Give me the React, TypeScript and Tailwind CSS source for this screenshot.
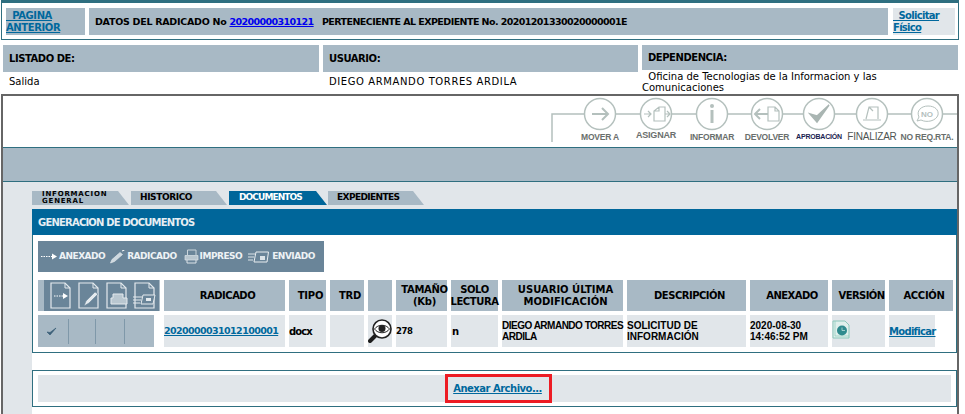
const stroke = "#b4c0bd"

function ActionStrip() {
  return (
    <svg width="406" height="46" viewBox="0 0 406 46" fill="none" className="block">
      <path d="M1 46V18H33M65 18H89M121 18H145M177 18H200M232 18H252M284 18H305M337 18H360M392 18H406" stroke={stroke} strokeWidth="1.5" />
      {[49, 105, 161, 216, 268, 321, 376].map((cx) => (
        <circle key={cx} cx={cx} cy="18" r="15.5" stroke={stroke} strokeWidth="1.5" />
      ))}
      {/* mover */}
      <path d="M41 18H57M51 12L57 18L51 24" stroke={stroke} strokeWidth="2" />
      {/* asignar */}
      <path d="M93 18H100M97 15L100 18L97 21M103 25V15L108 11H114V25ZM108 11V15H103M114 18H119M116 15L119 18L116 21" stroke={stroke} strokeWidth="1.2" />
      {/* informar */}
      <circle cx="161" cy="10" r="2" fill={stroke} />
      <path d="M161 14V27" stroke={stroke} strokeWidth="3" />
      {/* devolver */}
      <path d="M205 18H217M209 13L204 18L209 23" stroke={stroke} strokeWidth="2" />
      <path d="M217 25V11H224L228 15V25ZM224 11V15H228" stroke={stroke} strokeWidth="1.2" />
      {/* aprobacion */}
      <path d="M259 18L266 26L278 9L266 20Z" fill="#a9b5b2" stroke="#a9b5b2" strokeWidth="1.5" />
      {/* finalizar */}
      <path d="M315 23L318 11H327V23M312 24H330M318 11L322 15" stroke={stroke} strokeWidth="1.2" />
      {/* no req */}
      <path d="M366 25L368 21C365 15 370 10 377 10C384 10 388 14 387 19C385 25 376 27 370 24Z" stroke={stroke} />
      <text x="370" y="21" fontSize="8" fontFamily="'Liberation Sans', sans-serif" fontWeight="700" fill={stroke}>NO</text>
    </svg>
  )
}

const actionLabels = [
  { text: "MOVER A", w: "w-[56px]", cls: "font-bold text-[8.5px] text-[#6a6f6d]" },
  { text: "ASIGNAR", w: "w-[56px]", cls: "font-bold text-[9px] text-[#6a6f6d] -mt-[2px]" },
  { text: "INFORMAR", w: "w-[56px]", cls: "font-bold text-[8.5px] text-[#6a6f6d]" },
  { text: "DEVOLVER", w: "w-[54px]", cls: "font-bold text-[8.5px] text-[#6a6f6d]" },
  { text: "APROBACIÓN", w: "w-[50px]", cls: "font-bold text-[7px] text-[#1a2250] mt-px" },
  { text: "FINALIZAR", w: "w-[56px]", cls: "font-normal text-[10px] text-[#4f5452] -mt-[2px]" },
  { text: "NO REQ.RTA.", w: "w-[54px]", cls: "font-bold text-[8.5px] text-[#6a6f6d]" },
]

function PageIcon({ children }: { children?: React.ReactNode }) {
  return (
    <svg width="24" height="27" viewBox="0 0 24 27" fill="none" className="shrink-0">
      <path d="M3 1H17L22 6V26H3Z" stroke="#e4eaee" strokeWidth="1.2" />
      <path d="M17 1V6H22" stroke="#e4eaee" strokeWidth="1" />
      {children}
    </svg>
  )
}

function Arrow() {
  return (
    <svg width="17" height="7" viewBox="0 0 17 7" className="shrink-0">
      <path d="M0 3.5H11" stroke="#fff" strokeDasharray="1.5 1" />
      <path d="M11 0.5L16 3.5L11 6.5Z" fill="#fff" />
    </svg>
  )
}

function Pen() {
  return (
    <svg width="15" height="14" viewBox="0 0 15 14" fill="none" className="shrink-0">
      <path d="M0.5 13L2 9.5L10 2.5L12.5 4.5L4.5 11.5Z" fill="#cfd9e0" stroke="#e7ecef" strokeWidth="0.6" />
      <path d="M12 1L14.5 0" stroke="#fff" />
    </svg>
  )
}

function Printer() {
  return (
    <svg width="15" height="15" viewBox="0 0 15 15" fill="none" className="shrink-0">
      <path d="M3.5 6V1H12V6" stroke="#c9d4db" />
      <path d="M1 6.5H14V11H1Z" fill="#b7c5ce" stroke="#dbe3e8" strokeWidth="0.7" />
      <path d="M3 11V14H12V11" stroke="#dbe3e8" />
    </svg>
  )
}

function Mail() {
  return (
    <svg width="21" height="12" viewBox="0 0 21 12" fill="none" className="shrink-0">
      <path d="M0 3H7M0 6H6M0 9H5" stroke="#dbe3e8" />
      <path d="M8 1H20.5L19 11H6Z" stroke="#e7ecef" />
      <path d="M12 5H17V9H12Z" fill="#dbe3e8" />
    </svg>
  )
}

function Magnifier() {
  return (
    <svg width="24" height="24" viewBox="0 0 24 24" fill="none">
      <path d="M8 16L2 22" stroke="#1d1d1d" strokeWidth="4" strokeLinecap="round" />
      <circle cx="14" cy="10" r="9" fill="#fff" stroke="#222" strokeWidth="1.6" />
      <path d="M6.5 10C10 5 18 5 21.5 10C18 15 10 15 6.5 10Z" fill="#fff" stroke="#222" />
      <circle cx="14" cy="9.5" r="3.5" fill="#222" />
    </svg>
  )
}

function VersionIcon() {
  return (
    <svg width="18" height="19" viewBox="0 0 18 19" fill="none">
      <path d="M1 1H13L17 5V18H1Z" fill="#dff0ec" stroke="#8cc8bb" />
      <path d="M3 1V16H17" stroke="#8cc8bb" strokeWidth="0.7" />
      <circle cx="10" cy="10.5" r="5" fill="#2f8b8e" />
      <path d="M10 7.5V10.5H13" stroke="#cfe9e5" strokeWidth="0.7" />
    </svg>
  )
}

const headers = [
  { text: "RADICADO", cls: "pl-[6px] tracking-[-0.5px]" },
  { text: "TIPO", cls: "pl-[6px] tracking-[-0.2px]" },
  { text: "TRD", cls: "pl-[6px] tracking-[-0.2px]" },
  { text: "", cls: "" },
  { text: "TAMAÑO (Kb)", cls: "pl-[6px] tracking-[-0.3px]" },
  { text: "SOLO LECTURA", cls: "tracking-[-0.4px]" },
  { text: "USUARIO ÚLTIMA MODIFICACIÓN", cls: "pl-[6px]" },
  { text: "DESCRIPCIÓN", cls: "pl-[6px] tracking-[-0.5px]" },
  { text: "ANEXADO", cls: "pl-[6px] tracking-[-0.5px]" },
  { text: "VERSIÓN", cls: "pl-[6px] tracking-[-0.6px]" },
  { text: "ACCIÓN", cls: "pl-[6px] tracking-[-0.3px]" },
]

const headCell =
  "flex items-center justify-center bg-[#a8b9c5] text-center text-[10px] leading-[11.5px] font-bold text-black"
const bodyCell = "flex items-center bg-[#e1e6ea] font-bold text-black"
const tabShape = "[clip-path:polygon(0_0,calc(100%-11px)_0,100%_100%,0_100%)]"

export default function App() {
  return (
    <div className="h-[414px] w-[965px] overflow-hidden bg-white font-['DejaVu_Sans','Verdana',sans-serif] text-black">
      {/* top frame */}
      <div className="ml-px w-[958px] border-x border-b border-[#2f6f80] border-t-[3px] px-1 pt-[5px] pb-1">
        <div className="flex h-[27px] gap-1 text-[10px] font-bold">
          <div className="w-[79px] shrink-0 bg-[#a8b9c5] pt-[2px] leading-[12px] tracking-[-0.4px] text-[#00689d]">
            <a href="#" className="underline">
              &nbsp;&nbsp;PAGINA ANTERIOR
            </a>
          </div>
          <div className="w-[799px] shrink-0 whitespace-pre bg-[#a8b9c5] pl-[6px] text-[9.5px] leading-[27px]">
            <span className="tracking-[-0.27px]">DATOS DEL RADICADO No </span>
            <a href="#" className="tracking-[-0.6px] text-[#0000ee] underline">
              20200000310121
            </a>
            <span className="tracking-[-0.55px]">{"   "}PERTENECIENTE AL EXPEDIENTE No. </span>
            <span className="tracking-[-0.6px]">20201201330020000001E</span>
          </div>
          <div className="ml-px w-[62px] shrink-0 bg-[#e1e6ea] pt-[2px] leading-[12px] tracking-[-0.7px] text-[#00689d]">
            <a href="#" className="underline">
              &nbsp;&nbsp;Solicitar Físico
            </a>
          </div>
        </div>
      </div>

      {/* listado */}
      <div className="mt-[5px] ml-[3px] flex h-[49px] w-[955px] gap-1 text-[10px]">
        <div className="w-[316px]">
          <div className="flex h-[27px] items-center bg-[#a8b9c5] pl-[6px] font-bold tracking-[-0.45px]">LISTADO DE:</div>
          <div className="pl-[6px] pt-[2px]">Salida</div>
        </div>
        <div className="w-[315px]">
          <div className="flex h-[27px] items-center bg-[#a8b9c5] pl-[6px] font-bold tracking-[-0.45px]">USUARIO:</div>
          <div className="pl-[6px] pt-[2px] tracking-[0.6px]">DIEGO ARMANDO TORRES ARDILA</div>
        </div>
        <div className="w-[316px]">
          <div className="flex h-[25px] items-center bg-[#a8b9c5] pl-[6px] font-bold tracking-[-0.45px]">DEPENDENCIA:</div>
          <div className="pt-px leading-[11px]">&nbsp;&nbsp;Oficina de Tecnologias de la Informacion y las Comunicaciones</div>
        </div>
      </div>

      {/* main frame */}
      <div className="ml-px w-[958px] border-x-2 border-t-2 border-[#666]">
        <div className="h-[51px] bg-white">
          <div className="ml-[548px] w-[406px]">
            <ActionStrip />
            <div className="-mt-[11px] flex pl-[21px] font-['Liberation_Sans',sans-serif] tracking-[-0.2px]">
              {actionLabels.map((l) => (
                <div key={l.text} className={`${l.w} flex justify-center whitespace-nowrap ${l.cls}`}>
                  {l.text}
                </div>
              ))}
            </div>
          </div>
        </div>
        <div className="h-[35px] border-y border-[#2f6f80] bg-[#a8b9c5]" />

        <div className="flex h-[240px] bg-[#e1e6ea]">
          <div className="w-[29px] shrink-0" />
          <div className="min-w-0 flex-1">
            {/* tabs */}
            <div className="flex h-[27px] pt-[9px] text-[9px] font-bold">
              <div className={`flex h-[14px] w-[97px] items-center bg-[#a8b9c5] pl-[10px] text-[7px] leading-[7px] tracking-[0.8px] ${tabShape}`}>
                INFORMACION GENERAL
              </div>
              <div className={`ml-[2px] flex h-[14px] w-[96px] items-center bg-[#a8b9c5] pl-[9px] tracking-[-0.4px] ${tabShape}`}>
                HISTORICO
              </div>
              <div className={`ml-[2px] flex h-[14px] w-[98px] items-center bg-[#00669a] pb-px pl-[10px] tracking-[-0.9px] text-white ${tabShape}`}>
                DOCUMENTOS
              </div>
              <div className={`ml-px flex h-[14px] w-[96px] items-center bg-[#a8b9c5] pl-[9px] tracking-[-0.6px] ${tabShape}`}>
                EXPEDIENTES
              </div>
            </div>

            <div className="bg-white">
              <div className="flex h-[26px] items-center bg-[#00669a] pl-[6px] text-[10px] font-bold tracking-[-0.8px] text-[#e6eef3]">
                GENERACION DE DOCUMENTOS
              </div>

              <div className="border-x border-b border-[#2f6f80] px-[5px] pt-[6px] pb-[5px]">
                <div className="flex h-[31px] w-[286px] items-center bg-[#6a8599] pl-[3px] text-[9px] font-bold tracking-[-0.5px] text-[#eef2f5]">
                  <Arrow />
                  <span className="ml-[1px] mr-[5px]">ANEXADO</span>
                  <Pen />
                  <span className="ml-[2px] mr-[7px]">RADICADO</span>
                  <Printer />
                  <span className="ml-[1px] mr-[6px]">IMPRESO</span>
                  <Mail />
                  <span className="ml-[3px]">ENVIADO</span>
                </div>

                <div className="mt-2 grid grid-cols-[122px_121px_37px_34px_24px_51px_47px_121px_119px_78px_53px_64px] gap-1">
                  <div className="flex h-[31px] bg-[#a8b9c5] pl-[6px]">
                    <div className="flex h-full w-[115px] items-center gap-[4px] bg-[#6a8599] pl-[4px]">
                      <PageIcon>
                        <g transform="translate(5 11)">
                          <path d="M1 3H10" stroke="#fff" strokeDasharray="1.5 1" />
                          <path d="M10 0L15 3L10 6Z" fill="#fff" />
                        </g>
                      </PageIcon>
                      <PageIcon>
                        <path d="M8 24L10 19L19 10L22 12L13 21Z" fill="#e4eaee" stroke="#6a8599" strokeWidth="0.6" />
                      </PageIcon>
                      <PageIcon>
                        <path d="M9 12H19V16H23V22H7V16H9Z" fill="#b9c7d0" stroke="#e4eaee" />
                      </PageIcon>
                      <PageIcon>
                        <path d="M1 15H10M1 18H9M1 21H8" stroke="#e4eaee" />
                        <path d="M11 13H23L21 22H9Z" fill="#6a8599" stroke="#e4eaee" />
                        <path d="M14 16H19V19H14Z" fill="#e4eaee" />
                      </PageIcon>
                    </div>
                  </div>
                  {headers.map((h, i) => (
                    <div key={i} className={`${headCell} ${h.cls}`}>
                      {h.text}
                    </div>
                  ))}

                  <div className="flex h-[32px] w-[116px] items-center bg-[#a8b9c5] pl-[9px]">
                    <svg width="10" height="9" viewBox="0 0 10 9" className="shrink-0">
                      <path d="M0 5L3 8L9 1L3 5.5Z" fill="#3c6079" stroke="#3c6079" strokeWidth="0.7" />
                    </svg>
                    <div className="ml-[11px] h-[25px] w-px bg-[#7f98a9]" />
                    <div className="ml-[26px] h-[25px] w-px bg-[#7f98a9]" />
                    <div className="ml-[28px] h-[25px] w-px bg-[#7f98a9]" />
                  </div>
                  <div className={bodyCell}>
                    <a href="#" className="text-[9.5px] tracking-[-0.6px] text-[#00689d] underline">
                      2020000031012100001
                    </a>
                  </div>
                  <div className={`${bodyCell} text-[10px] tracking-[-0.9px]`}>docx</div>
                  <div className={bodyCell} />
                  <div className={`${bodyCell} justify-center`}>
                    <Magnifier />
                  </div>
                  <div className={`${bodyCell} text-[8.5px] tracking-[-0.4px]`}>278</div>
                  <div className={`${bodyCell} pl-[1px] text-[10px]`}>n</div>
                  <div className={`${bodyCell} whitespace-nowrap font-['Liberation_Sans',sans-serif] text-[10px] leading-[11.5px] tracking-[-0.5px]`}>
                    <span>
                      DIEGO ARMANDO TORRES
                      <br />
                      ARDILA
                    </span>
                  </div>
                  <div className={`${bodyCell} font-['Liberation_Sans',sans-serif] text-[10px] leading-[11.5px]`}>
                    SOLICITUD DE INFORMACIÓN
                  </div>
                  <div className={`${bodyCell} font-['Liberation_Sans',sans-serif] text-[10px] leading-[11.5px]`}>
                    2020-08-30 14:46:52 PM
                  </div>
                  <div className={`${bodyCell} items-start pt-[5px]`}>
                    <VersionIcon />
                  </div>
                  <div className={`${bodyCell} w-[46px] text-[10px] tracking-[-0.7px]`}>
                    <a href="#" className="text-[#00689d] underline">
                      Modificar
                    </a>
                  </div>
                </div>
              </div>

              <div className="mt-[17px] border border-[#2f6f80] px-[5px] py-1">
                <div className="relative flex h-[27px] items-center justify-center bg-[#e1e6ea] pl-[6px] text-[10px] font-bold tracking-[-0.5px]">
                  <a href="#" className="text-[#00689d] underline">
                    Anexar Archivo...
                  </a>
                  <div className="absolute top-[-1px] left-[407px] h-[29px] w-[107px] border-[3px] border-[#ed1c24]" />
                </div>
              </div>
              <div className="h-10" />
            </div>
          </div>
        </div>
      </div>
    </div>
  )
}
